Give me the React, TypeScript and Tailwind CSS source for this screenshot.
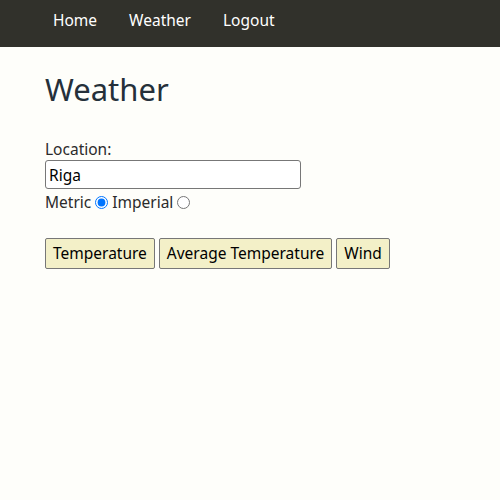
import { useState } from 'react';

export default function App() {
    const [units, setUnits] = useState('metric');
    const [location, setLocation] = useState('Riga');

    return (
        <div className="min-h-[500px] bg-[#fefefa] text-[#2b2b2b]" style={{ fontFamily: '"Noto Sans", "DejaVu Sans", sans-serif' }}>
            <nav className="h-[47px] bg-[#31312b] flex items-start pt-[8px] pl-[53px] gap-[32px] text-[15.5px] leading-[24px] text-white">
                <a href="#">Home</a>
                <a href="#">Weather</a>
                <a href="#">Logout</a>
            </nav>

            <div className="px-[45px]">
                <h1 className="text-[31px] text-[#25303a] mt-[22px] mb-[30px] leading-[40px]">Weather</h1>

                <label className="block text-[15.5px] leading-[20px]">Location:</label>
                <input
                    className="block w-[256px] h-[29px] mt-[1px] border border-[#777] rounded-[3px] bg-white px-[3px] text-[15.5px] text-black"
                    type="text"
                    value={location}
                    onChange={(e) => setLocation(e.target.value)}
                />
                <div className="flex items-center text-[15.5px] leading-[22px] mt-[2px]">
                    <span>Metric</span>
                    <input type="radio" name="units" className="ml-[4px] mr-[4px] w-[13px] h-[13px]" checked={units === 'metric'} onChange={() => setUnits('metric')} />
                    <span>Imperial</span>
                    <input type="radio" name="units" className="ml-[4px] mr-[4px] w-[13px] h-[13px]" checked={units === 'imperial'} onChange={() => setUnits('imperial')} />
                </div>

                <div className="flex gap-[4px] mt-[25px]">
                    <button className="h-[31px] px-[7px] border border-[#777] rounded-[2px] bg-[#f3f0c8] text-[15.5px] text-black">Temperature</button>
                    <button className="h-[31px] px-[7px] border border-[#777] rounded-[2px] bg-[#f3f0c8] text-[15.5px] text-black">Average Temperature</button>
                    <button className="h-[31px] px-[7px] border border-[#777] rounded-[2px] bg-[#f3f0c8] text-[15.5px] text-black">Wind</button>
                </div>
            </div>
        </div>
    );
}
